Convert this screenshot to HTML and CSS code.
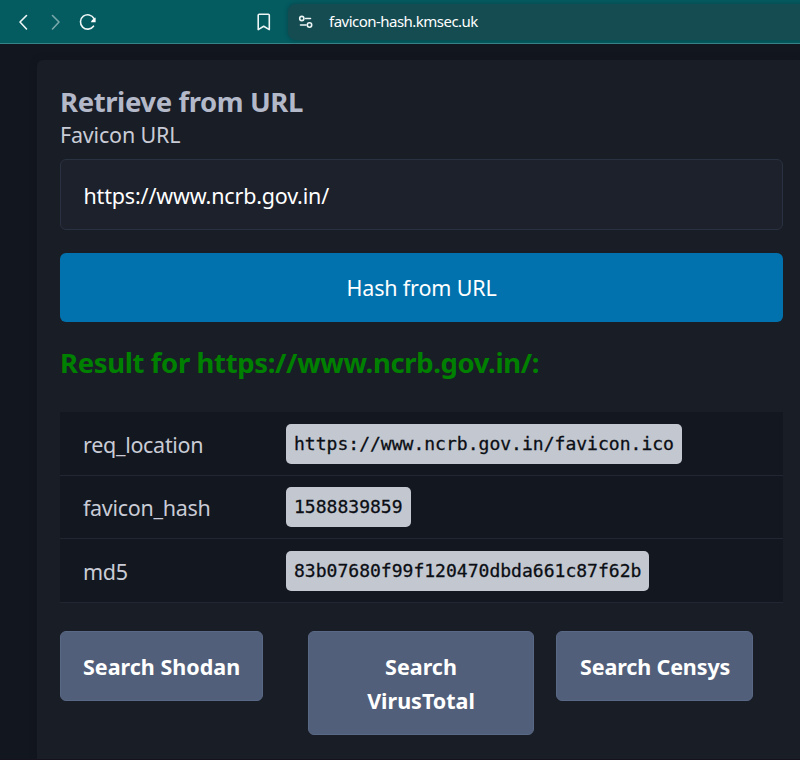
FILE: index.html
```html
<!DOCTYPE html>
<html lang="en">
<head>
<meta charset="utf-8">
<title>Favicon hash</title>
<link rel="stylesheet" href="styles.css">
</head>
<body>
<header class="toolbar">
  <nav class="nav">
    <svg class="icon" width="16" height="20" viewBox="0 0 16 20"><path d="M10.500 3.500 4 10l6.500 7" /></svg>
    <svg class="icon dim" width="16" height="20" viewBox="0 0 16 20"><path d="M5.500 3.500l6.500 6.500-6.500 7" /></svg>
    <svg class="icon" width="20" height="20" viewBox="0 0 20 20"><path d="M15.500 14.200A7.200 7.200 0 1 1 16 6.500" /><path class="fill" d="M17.600 5.500v4.800h-4.800q1-2.800 4.800-4.800z" /></svg>
  </nav>
  <svg class="icon bookmark" width="14" height="18" viewBox="0 0 14 18"><path d="M1.200 2.200q0-1 1-1h9.100q1 0 1 1v14.400L6.700 13.200 1.200 16.600z" /></svg>
  <div class="address">
    <svg class="icon" width="16" height="16" viewBox="0 0 16 16"><circle cx="3.800" cy="4.500" r="2.100" /><path d="M7.500 4.500H12.500M2.500 11H8" /><circle cx="11.500" cy="11" r="2.200" /></svg>
    <span class="host">favicon-hash.kmsec.uk</span>
  </div>
</header>
<main class="card">
  <h2 class="title">Retrieve from URL</h2>
  <label class="label">Favicon URL</label>
  <div class="input">https://www.ncrb.gov.in/</div>
  <div class="submit">Hash from URL</div>
  <h2 class="result">Result for https://www.ncrb.gov.in/:</h2>
  <div class="table">
    <div class="row"><span class="key">req_location</span><code>https://www.ncrb.gov.in/favicon.ico</code></div>
    <div class="row"><span class="key">favicon_hash</span><code>1588839859</code></div>
    <div class="row"><span class="key">md5</span><code>83b07680f99f120470dbda661c87f62b</code></div>
  </div>
  <div class="links">
    <div><a class="btn">Search Shodan</a></div>
    <div><a class="btn">Search VirusTotal</a></div>
    <div><a class="btn censys">Search Censys</a></div>
  </div>
</main>
<footer class="edge"></footer>
</body>
</html>
```
FILE: styles.css
```css
* { box-sizing: border-box; }
body {
  margin: 0;
  height: 760px;
  overflow: hidden;
  background: #12161f;
  color: #c9ccd6;
  font: 21.5px/34px "Noto Sans", sans-serif;
}
.toolbar {
  display: flex;
  align-items: center;
  height: 44px;
  background: #045b60;
  border-bottom: 1px solid #378488;
}
.nav { display: flex; flex: none; align-items: center; gap: 15px; padding-left: 16px; }
.icon { display: block; flex: none; fill: none; stroke: #edf5f5; stroke-width: 1.6; stroke-linecap: round; stroke-linejoin: round; }
.dim { opacity: .5; }
.fill { fill: #fff; stroke: none; }
.bookmark { margin-left: 159px; }
.address {
  display: flex;
  align-items: center;
  flex: none;
  width: 540px;
  height: 36px;
  margin-left: 17px;
  padding-left: 10px;
  gap: 15px;
  border-radius: 8px;
  background: #154c52;
  box-shadow: 0 0 4px #06454a;
}
.host { color: #fff; font-size: 15px; letter-spacing: -.52px; line-height: 34px; position: relative; top: -1px; }
.card {
  width: 769px;
  height: 699px;
  margin: 16px 0 0 37px;
  padding: 25px 23px;
  border-radius: 6px 6px 0 0;
  background: #191d26;
  box-shadow: 0 0 6px #11151c;
}
.edge { height: 1px; background: #17111d; }
.title, .result { margin: 0; font-size: 27.5px; line-height: 34px; font-weight: 700; color: #b3b9c9; letter-spacing: -.4px; }
.title { line-height: 33px; height: 34px; }
.label { display: block; height: 34px; line-height: 32px; letter-spacing: -.18px; }
.input {
  height: 71px;
  margin-top: 6px;
  padding-left: 22.5px;
  border: 1px solid #2a3140;
  border-radius: 6px;
  background: #1c212c;
  color: #fff;
  line-height: 71px;
  letter-spacing: -.17px;
}
.submit {
  height: 69px;
  margin-top: 23px;
  border-radius: 6px;
  background: #0172ad;
  color: #fff;
  line-height: 70px;
  text-align: center;
  letter-spacing: -.15px;
}
.result { height: 34px; margin-top: 25px; line-height: 32px; color: #008000; letter-spacing: -.37px; }
.table { margin-top: 31px; background: #13171f; }
.row { display: grid; grid-template-columns: 202px 1fr; height: 63.7px; padding: 11.5px 23px; border-bottom: 1px solid #202632; }
.key { line-height: 41px; letter-spacing: -.3px; }
code {
  justify-self: start;
  height: 40px;
  padding: 0 8px;
  margin-left: 1px;
  border-radius: 5px;
  background: #c2c7d0;
  color: #0b0e14;
  font: 18.05px/40px "DejaVu Sans Mono", monospace;
  -webkit-text-stroke: .3px #0b0e14;
  white-space: nowrap;
}
.links { display: grid; grid-template-columns: repeat(3, 226px); column-gap: 22px; margin-top: 28px; }
.btn {
  display: inline-block;
  padding: 17.5px 22px 15.5px;
  border: 1px solid #596885;
  border-radius: 6px;
  background: #525f7a;
  color: #fff;
  font-weight: 700;
  line-height: 34.5px;
  text-align: center;
}
.censys { padding-left: 23px; letter-spacing: -.13px; }
```
